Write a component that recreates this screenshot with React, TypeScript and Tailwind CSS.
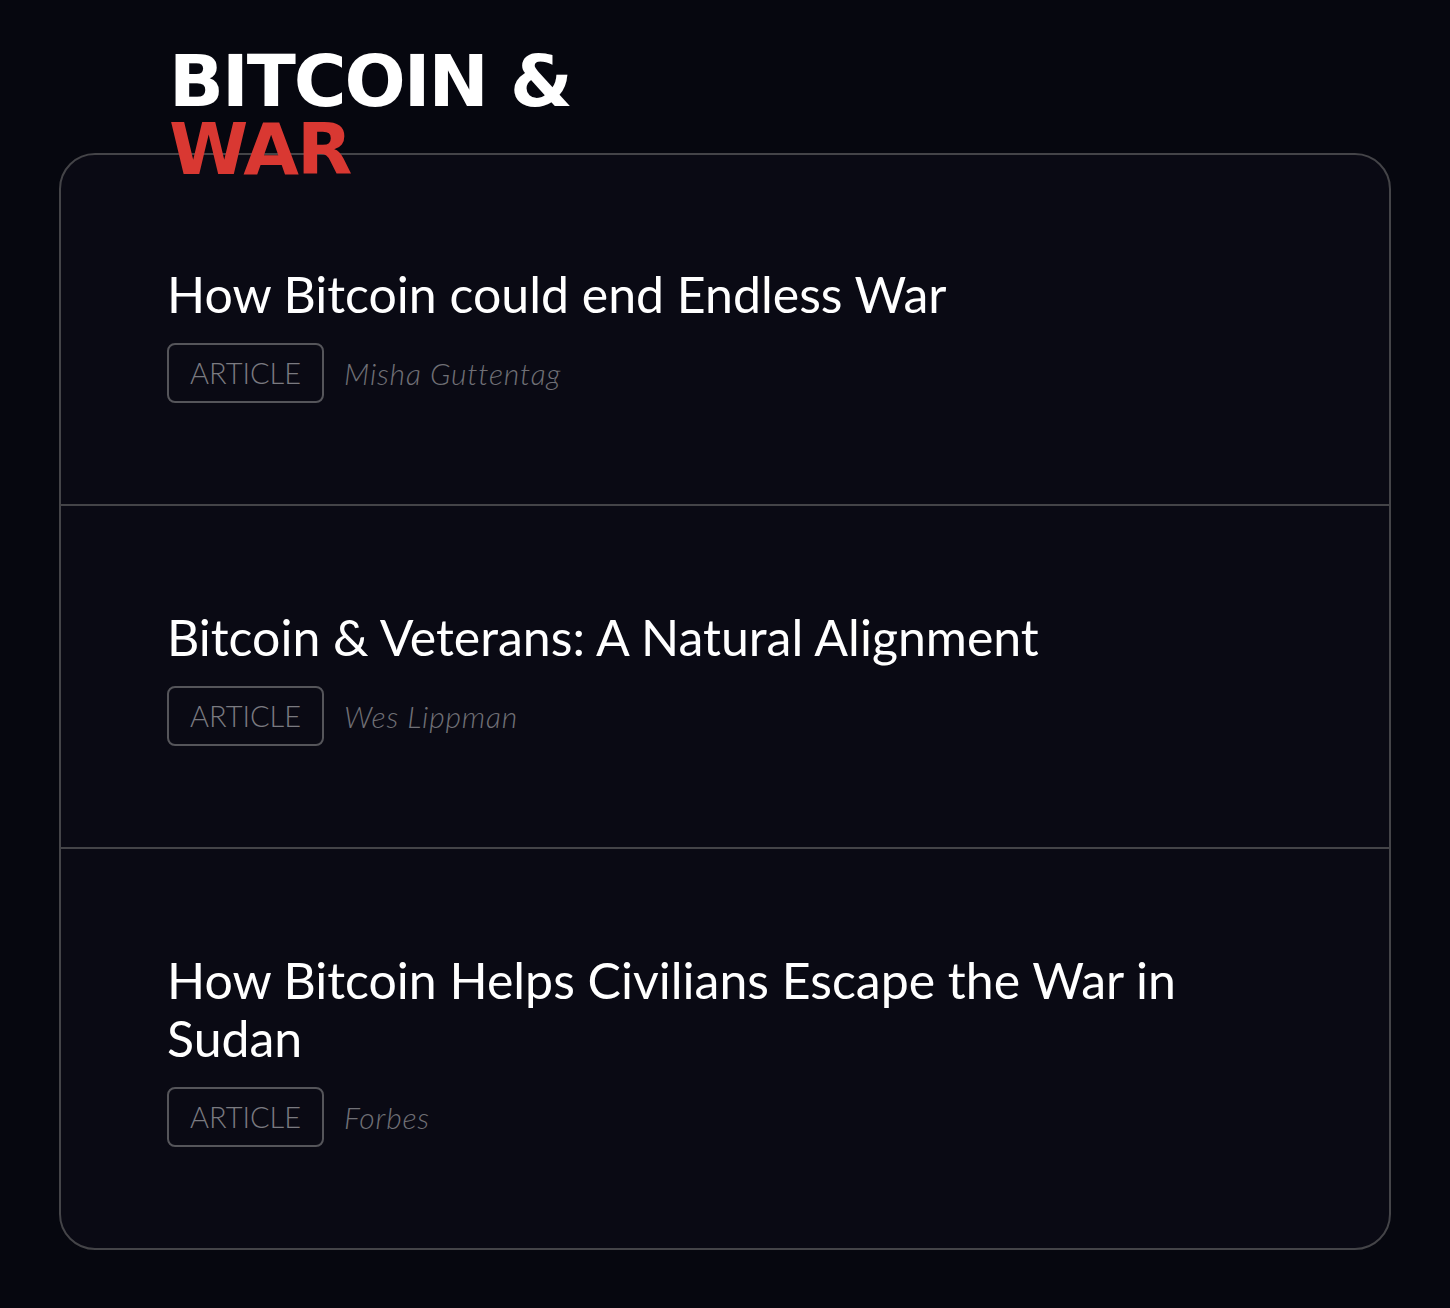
import React from "react";

const items = [
  { title: "How Bitcoin could end Endless War", author: "Misha Guttentag" },
  { title: "Bitcoin & Veterans: A Natural Alignment", author: "Wes Lippman" },
  { title: "How Bitcoin Helps Civilians Escape the War in Sudan", author: "Forbes" },
];

export default function App() {
  return (
    <div className="min-h-[1308px] w-full bg-[#06070f] px-[59px] pt-[47px] pb-[58px] font-['Lato',sans-serif]">
      <h2 className="relative z-10 pl-[110px] font-['DejaVu_Sans',sans-serif] text-[72px] font-bold uppercase leading-[68px] tracking-[-2px] text-white">
        <span className="block">Bitcoin &amp;</span>
        <span className="block text-[#d93832]">War</span>
      </h2>
      <div className="-mt-[30px] overflow-hidden rounded-[36px] border-2 border-[#444448] bg-[#0a0a14]">
        {items.map((it, i) => (
          <div
            key={i}
            className={`px-[106px] pb-[101px] ${i > 0 ? "border-t-2 border-[#444448] pt-[102px]" : "pt-[110px]"}`}
          >
            <div className="max-w-[1060px] text-[50px] font-normal leading-[58px] text-white">{it.title}</div>
            <div className="mt-[20px] flex items-center gap-[20px]">
              <span className="flex h-[60px] w-[157px] items-center justify-center rounded-[8px] border-2 border-[#55555a] text-[29px] font-light text-[#7a7a80]">
                ARTICLE
              </span>
              <span className="text-[30px] font-light italic tracking-[0.8px] text-[#707076]">{it.author}</span>
            </div>
          </div>
        ))}
      </div>
    </div>
  );
}
